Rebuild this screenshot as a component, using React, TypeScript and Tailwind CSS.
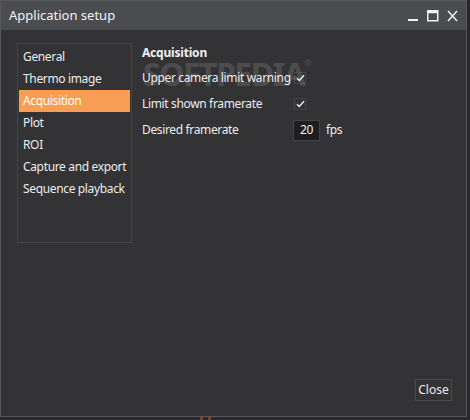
import React from "react";

const font = { fontFamily: '"Noto Sans", "Open Sans", sans-serif' };

const items = [
  "General",
  "Thermo image",
  "Acquisition",
  "Plot",
  "ROI",
  "Capture and export",
  "Sequence playback",
];

const Check = () => (
  <div className="w-[12px] h-[12px] border border-[#444447] flex items-center justify-center shrink-0">
    <svg width="9" height="8" viewBox="0 0 9 8">
      <path d="M1 4.2 L3.3 6.5 L8 1.2" stroke="#f0f0f0" strokeWidth="1.4" fill="none" />
    </svg>
  </div>
);

export default function App() {
  return (
    <div className="w-[470px] h-[420px] bg-[#29292b] overflow-hidden relative" style={font}>
      <div className="w-[467px] h-[417px] border border-[#58585c] flex flex-col">
        {/* Title bar */}
        <div className="h-[29px] bg-[#4b4c50] flex items-center pl-[8px] pr-[8px] shrink-0">
          <span className="text-[13px] text-[#f2f2f2]">Application setup</span>
          <div className="ml-auto flex items-center gap-[8px] text-[#f0f0f0]">
            <svg width="11" height="12" viewBox="0 0 11 12">
              <rect x="0" y="9" width="10" height="2" fill="#f0f0f0" />
            </svg>
            <svg width="12" height="12" viewBox="0 0 12 12">
              <rect x="0.75" y="0.75" width="10" height="10" stroke="#f0f0f0" strokeWidth="1.5" fill="none" />
              <rect x="0.75" y="0.75" width="10" height="2.5" fill="#f0f0f0" />
            </svg>
            <svg width="11" height="12" viewBox="0 0 11 12">
              <path d="M1 1 L10 11 M10 1 L1 11" stroke="#f0f0f0" strokeWidth="1.5" />
            </svg>
          </div>
        </div>

        {/* Body */}
        <div className="flex-1 bg-[#333335] flex flex-col">
          <div className="flex pl-[16px] pt-[13px] flex-1">
            <div className="w-[115px] h-[200px] border border-[#454548] pt-[2px] shrink-0">
              {items.map((it) => (
                <div
                  key={it}
                  className={`h-[22px] mx-[1px] pl-[4px] flex items-center text-[12px] tracking-[-0.35px] whitespace-nowrap ${
                    it === "Acquisition" ? "bg-[#f79e54] text-white" : "text-[#ececec]"
                  }`}
                >
                  {it}
                </div>
              ))}
            </div>

            <div className="pl-[10px] pt-[1px] relative">
              <div className="h-[17px] flex items-center text-[12px] font-bold tracking-[-0.2px] text-[#f0f0f0]">
                Acquisition
              </div>
              <div className="absolute left-[11px] top-[15px] text-[32px] font-bold tracking-[-1.5px] text-[#ffffff]/[0.15] leading-none select-none whitespace-nowrap">
                SOFTPEDIA<span className="text-[9px] align-top">®</span>
              </div>
              <div className="mt-[6px] flex flex-col gap-[4px] text-[12px] tracking-[-0.35px] whitespace-nowrap text-[#ececec]">
                <div className="h-[22px] flex items-center">
                  <span className="w-[152px]">Upper camera limit warning</span>
                  <Check />
                </div>
                <div className="h-[22px] flex items-center">
                  <span className="w-[152px]">Limit shown framerate</span>
                  <Check />
                </div>
                <div className="h-[22px] flex items-center">
                  <span className="w-[151px]">Desired framerate</span>
                  <div className="w-[27px] h-[21px] bg-[#1e1e20] border border-[#444447] flex items-center justify-center text-[#f0f0f0]">
                    20
                  </div>
                  <span className="ml-[6px]">fps</span>
                </div>
              </div>
            </div>
          </div>

          <div className="flex justify-end pr-[14px] pb-[15px]">
            <div className="w-[37px] h-[22px] border border-[#4a4a4d] flex items-center justify-center text-[12px] text-[#ececec]">
              Close
            </div>
          </div>
        </div>
      </div>
      <div className="absolute left-[200px] top-[417px] w-[3px] h-[3px] bg-[#6b4a30]" />
      <div className="absolute left-[208px] top-[417px] w-[3px] h-[3px] bg-[#6b4a30]" />
    </div>
  );
}
